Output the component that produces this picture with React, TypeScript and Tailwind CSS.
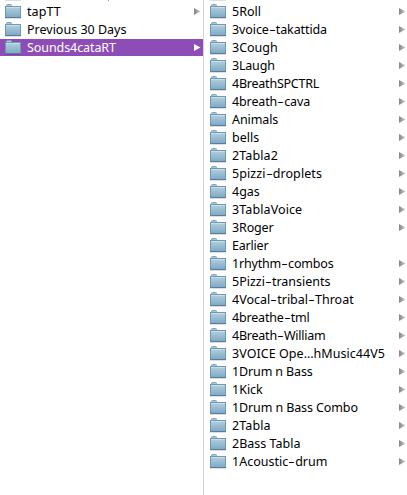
type Item = { name: string; arrow: boolean; tracking?: string; selected?: boolean };

const places: Item[] = [
  { name: "tapTT", arrow: true, tracking: "tracking-[0.1px]" },
  { name: "Previous 30 Days", arrow: false },
  { name: "Sounds4cataRT", arrow: true, selected: true, tracking: "tracking-[-0.08px]" },
];

const folders: Item[] = [
  { name: "5Roll", arrow: true },
  { name: "3voice-takattida", arrow: true, tracking: "tracking-[-0.1px]" },
  { name: "3Cough", arrow: true },
  { name: "3Laugh", arrow: true, tracking: "tracking-[-0.2px]" },
  { name: "4BreathSPCTRL", arrow: true, tracking: "tracking-[-0.23px]" },
  { name: "4breath-cava", arrow: true, tracking: "tracking-[-0.12px]" },
  { name: "Animals", arrow: true, tracking: "tracking-[-0.1px]" },
  { name: "bells", arrow: true },
  { name: "2Tabla2", arrow: true, tracking: "tracking-[0.1px]" },
  { name: "5pizzi-droplets", arrow: true, tracking: "tracking-[0.1px]" },
  { name: "4gas", arrow: true },
  { name: "3TablaVoice", arrow: true, tracking: "tracking-[0.1px]" },
  { name: "3Roger", arrow: true, tracking: "tracking-[-0.15px]" },
  { name: "Earlier", arrow: false, tracking: "tracking-[-0.2px]" },
  { name: "1rhythm-combos", arrow: true, tracking: "tracking-[-0.18px]" },
  { name: "5Pizzi-transients", arrow: true },
  { name: "4Vocal-tribal-Throat", arrow: true },
  { name: "4breathe-tml", arrow: true, tracking: "tracking-[-0.17px]" },
  { name: "4Breath-William", arrow: true, tracking: "tracking-[-0.23px]" },
  { name: "3VOICE Ope…hMusic44V5", arrow: true, tracking: "tracking-[0.05px]" },
  { name: "1Drum n Bass", arrow: true, tracking: "tracking-[-0.13px]" },
  { name: "1Kick", arrow: true },
  { name: "1Drum n Bass Combo", arrow: true, tracking: "tracking-[-0.11px]" },
  { name: "2Tabla", arrow: true, tracking: "tracking-[0.1px]" },
  { name: "2Bass Tabla", arrow: true },
  { name: "1Acoustic-drum", arrow: true },
];

function FolderIcon() {
  return (
    <svg width="16" height="16" viewBox="0 0 16 16" className="mt-px shrink-0 self-start">
      <path d="M0 14.5H16" stroke="#000" strokeOpacity="0.13" />
      <path d="M1.5 3V1.5Q1.5 .5 2.5 .5H5.5Q6.5 .5 6.5 1.5V3" fill="#a9c8db" stroke="#7da3bb" />
      <rect x="0.5" y="2.5" width="15" height="11" fill="url(#folder)" stroke="#6f99b2" />
      <path d="M1 3.5H15" stroke="#c9dfeb" />
      <path d="M0 13.5H16" stroke="#587f99" />
    </svg>
  );
}

// Hyphens are drawn as wide as a dash, as in the system typeface.
function Label({ text }: { text: string }) {
  return (
    <>
      {text.split("-").map((part, i) => (
        <span key={i}>
          {i > 0 && <span className="inline-block w-[7px] scale-x-[1.6] text-center tracking-normal">-</span>}
          {part}
        </span>
      ))}
    </>
  );
}

function Row({ item }: { item: Item }) {
  return (
    <li className="h-[18px]">
      <div className={`flex h-[17px] items-center ${item.selected ? "bg-[#8e4db6] text-white" : "text-black"}`}>
        <FolderIcon />
        <span className={`ml-1.5 grow whitespace-nowrap leading-[17px] ${item.tracking ?? ""}`}>
          <Label text={item.name} />
        </span>
        {item.arrow && (
          <svg width="7" height="9" viewBox="0 0 7 9" className="shrink-0">
            <path d="M0 1L6.5 4.5L0 8Z" fill={item.selected ? "#fff" : "url(#arrow)"} />
          </svg>
        )}
      </div>
    </li>
  );
}

export default function App() {
  return (
    <main className="flex h-[495px] w-[407px] overflow-hidden bg-white font-['Noto_Sans',sans-serif] text-[12.5px]">
      <svg width="0" height="0" className="absolute">
        <defs>
          <linearGradient id="folder" x1="0" y1="0" x2="0" y2="1">
            <stop stopColor="#b5d0e0" />
            <stop offset="1" stopColor="#7da9c4" />
          </linearGradient>
          <linearGradient id="arrow">
            <stop stopColor="#858585" />
            <stop offset="1" stopColor="#cacaca" />
          </linearGradient>
        </defs>
      </svg>
      <ul className="w-[203px] [&_div]:pr-0.5 [&_div]:pl-[5px]">
        <li className="flex h-[3px] pl-[5px]">
          <span className="h-px w-4 bg-[#dedede]" />
          <span className="ml-[87px] h-px w-px bg-[#999]" />
        </li>
        {places.map((item) => <Row key={item.name} item={item} />)}
      </ul>
      <ul className="w-[204px] border-l border-[#d4d4d4] [&_div]:pr-px [&_div]:pl-1.5">
        <li className="flex h-[3px] pl-1.5">
          <span className="h-px w-4 bg-[#dedede]" />
        </li>
        {folders.map((item) => <Row key={item.name} item={item} />)}
      </ul>
    </main>
  );
}
